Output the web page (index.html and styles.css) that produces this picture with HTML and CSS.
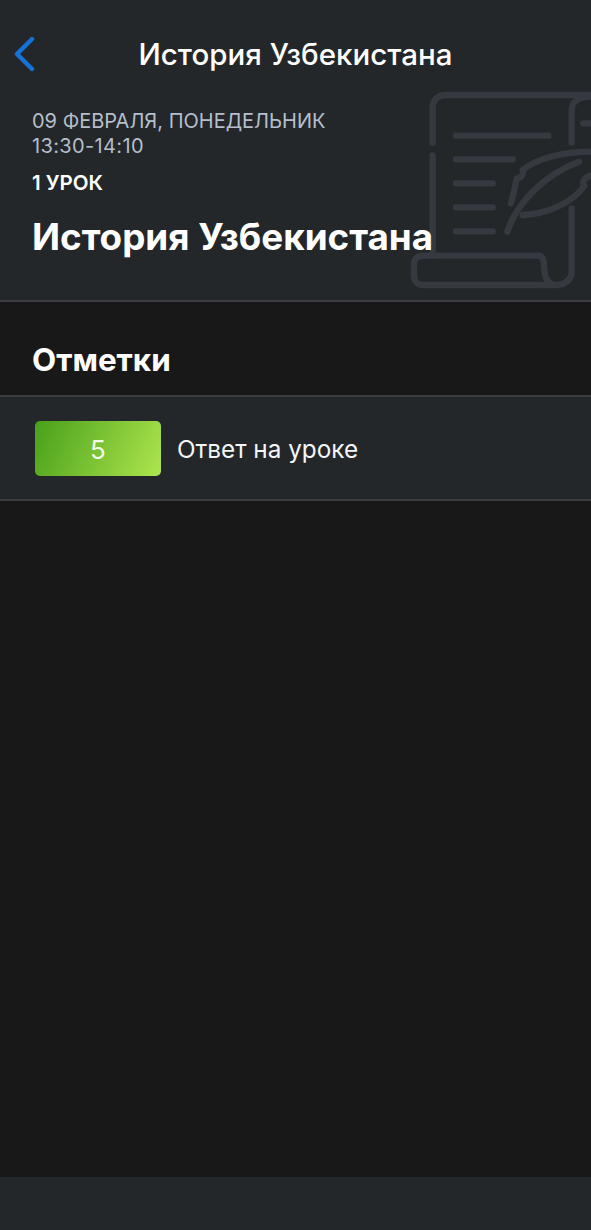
FILE: index.html
```html
<!DOCTYPE html>
<html lang="ru">
<head>
<meta charset="utf-8">
<title>История Узбекистана</title>
<link rel="stylesheet" href="styles.css">
</head>
<body>
<div class="screen">
  <header class="lesson">
    <svg class="scroll" viewBox="0 0 573 690" aria-hidden="true">
      <g fill="none" stroke="#363a40" stroke-width="19" stroke-linecap="round" stroke-linejoin="round">
        <path d="M98 188V82C98 60 115 45 137 45H573"/>
        <path d="M98 226V527"/>
        <path d="M515 188V92C515 65 535 50 573 50"/>
        <path d="M550 130H573"/>
        <path d="M515 385V575C515 598 495 615 470 615H68C52 615 42 602 42 587V555C42 538 52 527 68 527H415C428 527 432 540 433 565C434 595 445 615 470 615"/>
        <path d="M168 167H445M168 238H338M168 310H278M168 382H278M168 454H278"/>
        <path d="M322 455C350 370 430 285 537 245"/>
        <path d="M573 215C490 215 410 235 368 270C372 285 362 295 350 295C345 320 340 345 333 370"/>
        <path d="M368 405C440 402 515 370 553 318C545 305 552 292 573 287"/>
      </g>
    </svg>
    <nav class="nav">
      <svg class="back" viewBox="0 0 22 36" aria-hidden="true">
        <path d="M19 3L4 18L19 33" fill="none" stroke="#1472d8" stroke-width="4.4" stroke-linecap="round" stroke-linejoin="round"/>
      </svg>
      <h1 class="nav-title">История Узбекистана</h1>
    </nav>
    <div class="info">
      <p class="date">09 ФЕВРАЛЯ, ПОНЕДЕЛЬНИК<br><span class="time">13:30-14:10</span></p>
      <p class="num">1 УРОК</p>
      <h2 class="subject">История Узбекистана</h2>
    </div>
  </header>
  <main class="content">
    <h3 class="section">Отметки</h3>
    <div class="row">
      <span class="grade">5</span>
      <span class="label">Ответ на уроке</span>
    </div>
  </main>
  <footer class="bar"></footer>
</div>
</body>
</html>
```
FILE: styles.css
```css
* { box-sizing: border-box; margin: 0; padding: 0; }
html, body { width: 591px; height: 1230px; overflow: hidden; background: #181818; }
body { font-family: "Inter", "Liberation Sans", sans-serif; color: #fff; }
.screen { height: 1230px; display: flex; flex-direction: column; }
.lesson { position: relative; height: 302px; background: #23272a; border-bottom: 2px solid #3a3e43; overflow: hidden; }
.scroll { position: absolute; left: 400px; top: 80px; width: 191px; height: 230px; }
.nav { position: relative; height: 109px; display: flex; justify-content: center; padding-top: 37px; }
.back { position: absolute; left: 13px; top: 36px; width: 22px; height: 36px; }
.nav-title { font-size: 29.5px; line-height: 34px; font-weight: 500; }
.info { position: relative; padding-left: 32px; }
.date { font-size: 20px; line-height: 25px; color: #b4bfcb; }
.time { letter-spacing: 0.36px; }
.num { margin-top: 11px; font-size: 20.5px; line-height: 25px; font-weight: 600; }
.subject { margin-top: 20px; font-size: 36.8px; line-height: 44px; font-weight: 700; white-space: nowrap; }
.content { flex: 1; }
.section { height: 93px; padding: 40px 0 0 32px; font-size: 31.4px; line-height: 36px; font-weight: 700; }
.row { height: 106px; display: flex; align-items: center; gap: 16px; padding-left: 35px; background: #23272a; border-top: 2px solid #3a3e43; border-bottom: 2px solid #3a3e43; }
.grade { width: 126px; height: 55px; padding-top: 2px; display: flex; align-items: center; justify-content: center; border-radius: 5px; background: linear-gradient(115deg, #48a01a, #aee54e); font-size: 26px; color: #f2fbe6; }
.label { font-size: 24.3px; line-height: 32px; padding-top: 2px; color: #f4f5f6; }
.bar { height: 53px; background: #23272a; }
```
